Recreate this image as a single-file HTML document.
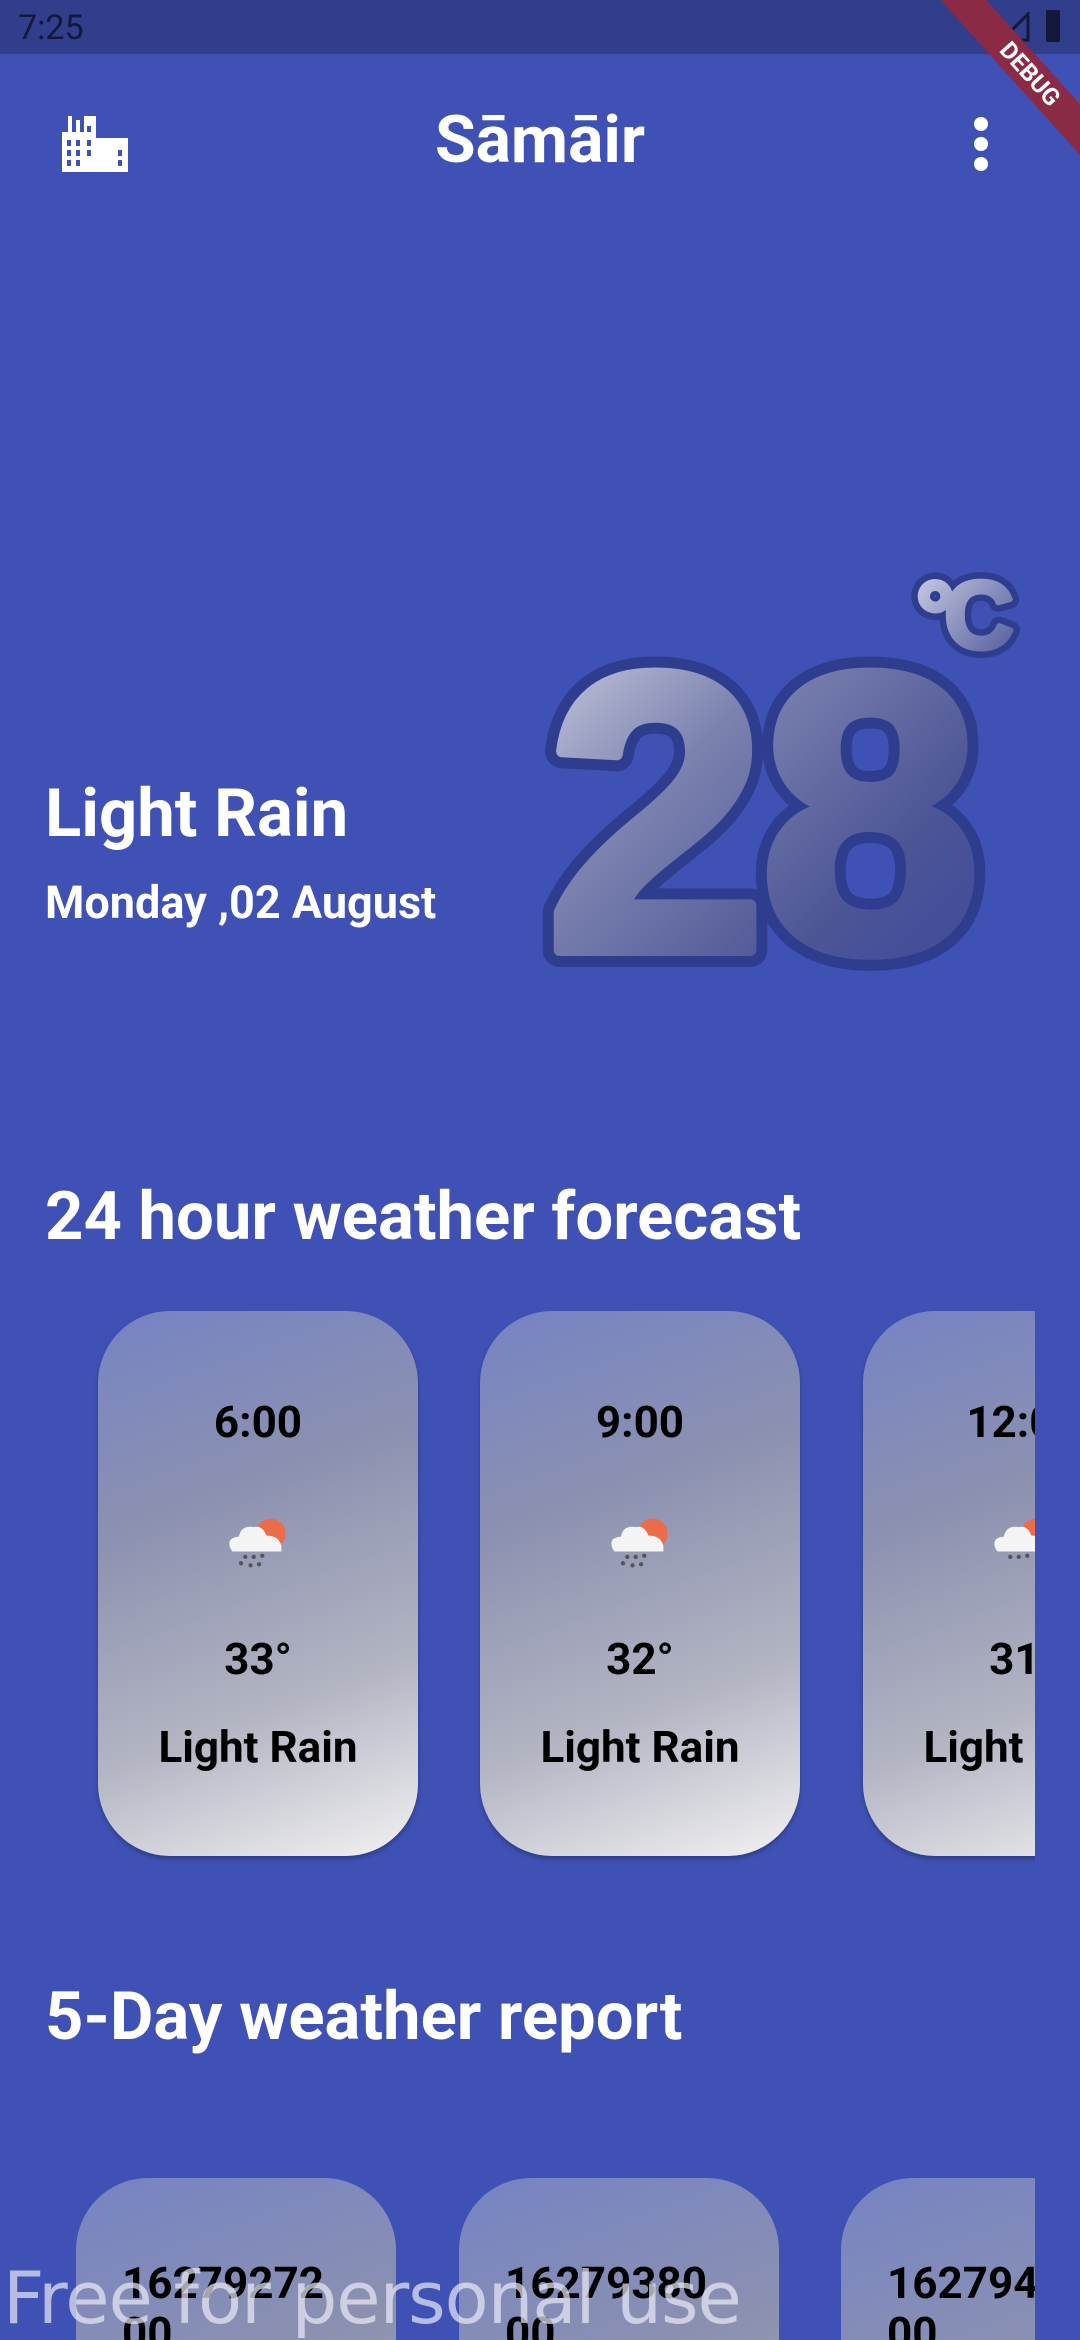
<!DOCTYPE html>
<html style="width:1080px;height:2340px;overflow:hidden"><head><meta charset="utf-8"><style>
*{margin:0;padding:0;box-sizing:border-box}
body{width:1080px;height:2340px;overflow:hidden;background:#3f51b5;font-family:"Roboto","Liberation Sans",sans-serif;position:relative}
.status{position:absolute;left:0;top:0;width:1080px;height:54px;background:#303e8c}
.time{position:absolute;left:18px;top:8px;font-size:34px;color:#14183a}
.abs{position:absolute}
.title{left:0;width:1080px;top:102px;text-align:center;color:#fff;font-weight:bold;font-size:66px}
.h{color:#fff;font-weight:bold;white-space:nowrap}
.card{position:absolute;width:320px;border-radius:72px;background:linear-gradient(160deg,#7683c4 0%,#8c91b0 35%,#b3b5c3 70%,#f2f2f2 100%);box-shadow:0 3px 5px rgba(0,0,0,.25);text-align:center;font-weight:bold;color:#000}
.card div{position:absolute;left:0;width:100%;font-size:44px}
.cl{position:absolute;left:0;top:1300px;width:1035px;height:580px;overflow:hidden}
.cl2{position:absolute;left:0;top:2170px;width:1035px;height:170px;overflow:hidden}
.c2{position:absolute;width:320px;height:300px;border-radius:72px;background:linear-gradient(160deg,#7683c4 0%,#8c91b0 60%,#a0a3b8 100%);font-weight:bold;font-size:44px;line-height:50px;padding:80px 0 0 46px;color:#000}
</style></head><body>
<div class="status"><div class="time">7:25</div>
<svg class="abs" style="left:960px;top:12px" width="40" height="30" viewBox="0 0 40 30"><path d="M2 6 Q20 -4 38 6 L20 28Z" fill="#14183a"/></svg>
<svg class="abs" style="left:1000px;top:12px" width="30" height="30"><path d="M28 2 L28 28 L2 28Z" fill="none" stroke="#14183a" stroke-width="3"/></svg>
<div class="abs" style="left:1046px;top:10px;width:14px;height:32px;background:#14183a;border-radius:2px"></div>
</div>
<svg class="abs" style="left:62px;top:116px" width="68" height="56" viewBox="0 0 68 56"><path d="M0 16 H6 V0 H10 V16 H14 V4 H18 V16 H22 V0 H34 V22 H66 V56 H0Z" fill="#fff"/>
<g fill="#3f51b5"><rect x="5" y="24" width="4" height="6"/><rect x="14" y="24" width="4" height="6"/><rect x="5" y="34" width="4" height="6"/><rect x="14" y="34" width="4" height="6"/><rect x="5" y="44" width="4" height="6"/><rect x="14" y="44" width="4" height="6"/><rect x="25" y="10" width="4" height="6"/><rect x="25" y="24" width="4" height="6"/><rect x="25" y="34" width="4" height="6"/><rect x="56" y="34" width="4" height="6"/><rect x="56" y="44" width="4" height="6"/></g></svg>
<div class="abs title">Sāmāir</div>
<svg class="abs" style="left:970px;top:116px" width="22" height="56"><circle cx="11" cy="8" r="7" fill="#fff"/><circle cx="11" cy="28" r="7" fill="#fff"/><circle cx="11" cy="48" r="7" fill="#fff"/></svg>
<div class="abs" style="left:880px;top:57px;width:300px;height:34px;background:#8b2a44;transform:rotate(48deg);color:#fff;font-weight:bold;font-size:24px;line-height:34px;text-align:center">DEBUG</div>

<div class="abs h" style="left:45px;top:775px;font-size:67px">Light Rain</div>
<div class="abs h" style="left:45px;top:876px;font-size:45px">Monday ,02 August</div>

<svg class="abs" style="left:520px;top:540px" width="540" height="460" viewBox="0 0 540 460">
<defs>
<linearGradient id="g" x1="0" y1="0" x2="1" y2="1"><stop offset="0" stop-color="#d6d8e6"/><stop offset=".35" stop-color="#7c83b0"/><stop offset=".7" stop-color="#4d5596"/><stop offset="1" stop-color="#3a479c"/></linearGradient>
<linearGradient id="g2" x1="0" y1="0" x2="1" y2="1"><stop offset="0" stop-color="#d0d3e6"/><stop offset="1" stop-color="#4b5599"/></linearGradient>
</defs>
<g font-family="Liberation Sans, sans-serif" font-weight="bold" stroke-linejoin="round">
<text x="26" y="410" font-size="396" letter-spacing="-6" fill="#2f3d8e" stroke="#2f3d8e" stroke-width="34">28</text>
<text x="26" y="410" font-size="396" letter-spacing="-6" fill="url(#g)" stroke="url(#g)" stroke-width="12">28</text>
<text x="396" y="108" font-size="96" letter-spacing="-10" fill="#2f3d8e" stroke="#2f3d8e" stroke-width="18">°C</text>
<text x="396" y="108" font-size="96" letter-spacing="-10" fill="url(#g2)" stroke="url(#g2)" stroke-width="5">°C</text>
</g></svg>

<div class="abs h" style="left:45px;top:1178px;font-size:67px">24 hour weather forecast</div>
<div class="cl">
<div class="card" style="left:98px;top:11px;height:545px">
<div style="top:85px">6:00</div>
<svg style="position:absolute;left:126px;top:204px" width="68" height="56" viewBox="0 0 64 50"><circle cx="44" cy="16" r="14" fill="#ec6c4a"/><path d="M6 30 Q2 20 14 19 Q16 8 28 10 Q36 8 40 18 Q52 18 54 28 L54 33 H8Z" fill="#f4f4f4"/><g fill="#555"><circle cx="20" cy="38" r="2"/><circle cx="28" cy="38" r="2"/><circle cx="36" cy="37" r="2"/><circle cx="16" cy="44" r="2"/><circle cx="25" cy="46" r="2"/><circle cx="33" cy="45" r="2"/></g></svg>
<div style="top:322px">33°</div>
<div style="top:410px">Light Rain</div></div>
<div class="card" style="left:480px;top:11px;height:545px">
<div style="top:85px">9:00</div>
<svg style="position:absolute;left:126px;top:204px" width="68" height="56" viewBox="0 0 64 50"><circle cx="44" cy="16" r="14" fill="#ec6c4a"/><path d="M6 30 Q2 20 14 19 Q16 8 28 10 Q36 8 40 18 Q52 18 54 28 L54 33 H8Z" fill="#f4f4f4"/><g fill="#555"><circle cx="20" cy="38" r="2"/><circle cx="28" cy="38" r="2"/><circle cx="36" cy="37" r="2"/><circle cx="16" cy="44" r="2"/><circle cx="25" cy="46" r="2"/><circle cx="33" cy="45" r="2"/></g></svg>
<div style="top:322px">32°</div>
<div style="top:410px">Light Rain</div></div>
<div class="card" style="left:863px;top:11px;height:545px">
<div style="top:85px">12:00</div>
<svg style="position:absolute;left:126px;top:204px" width="68" height="56" viewBox="0 0 64 50"><circle cx="44" cy="16" r="14" fill="#ec6c4a"/><path d="M6 30 Q2 20 14 19 Q16 8 28 10 Q36 8 40 18 Q52 18 54 28 L54 33 H8Z" fill="#f4f4f4"/><g fill="#555"><circle cx="20" cy="38" r="2"/><circle cx="28" cy="38" r="2"/><circle cx="36" cy="37" r="2"/></g></svg>
<div style="top:322px">31°</div>
<div style="top:410px">Light Rain</div></div>
</div>

<div class="abs h" style="left:45px;top:1978px;font-size:67px">5-Day weather report</div>
<div class="cl2">
<div class="c2" style="left:76px;top:8px">16279272<br>00</div>
<div class="c2" style="left:459px;top:8px">16279380<br>00</div>
<div class="c2" style="left:841px;top:8px">16279488<br>00</div>
</div>
<div class="abs" style="left:3px;top:2256px;height:84px;overflow:hidden;font-size:72px;line-height:84px;color:rgba(235,235,245,.7);font-family:'DejaVu Sans','Liberation Sans',sans-serif;white-space:nowrap;letter-spacing:-1px">Free for personal use</div>
</body></html>
